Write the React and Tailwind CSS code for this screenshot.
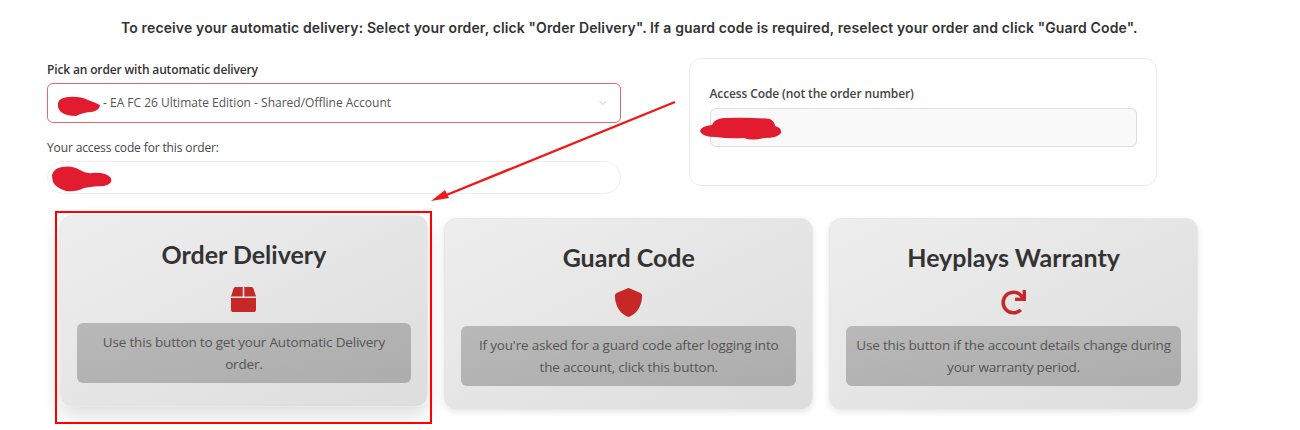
import React from "react";
import { FaBox, FaRedo } from "react-icons/fa";
import { FaShield } from "react-icons/fa6";
import { ChevronDown } from "lucide-react";

const cards = [
  { t: "Order Delivery", d: "Use this button to get your Automatic Delivery order.", I: FaBox, size: 25, lifted: true },
  { t: "Guard Code", d: "If you're asked for a guard code after logging into the account, click this button.", I: FaShield, size: 29 },
  { t: "Heyplays Warranty", d: "Use this button if the account details change during your warranty period.", I: FaRedo, size: 25 },
];

function Card({ t, d, I, size, lifted }) {
  return (
    <div
      className={
        "h-[192px] rounded-[12px] bg-gradient-to-br from-[#eeeeee] to-[#dddddd] px-[16px] pt-[22px] flex flex-col items-center border border-[#e8e8e8] " +
        (lifted ? "-translate-y-[3px] shadow-[0_8px_20px_rgba(0,0,0,0.14)]" : "shadow-[0_2px_6px_rgba(0,0,0,0.1)]")
      }
    >
      <h3 className="text-[25px] leading-[32px] font-bold text-[#333333] font-['Lato',sans-serif]">{t}</h3>
      <div className="mt-[17px] h-[25px] flex items-center justify-center">
        <I className="text-[#c62828] shrink-0" size={size} />
      </div>
      <p className="mt-[11px] w-full h-[60px] rounded-[6px] bg-gradient-to-br from-[#b8b8b8] to-[#adadad] text-center text-[13.5px] tracking-[-0.18px] leading-[22px] text-[#555555] px-[10px] pt-[8px] font-['Open_Sans',sans-serif]">
        {d}
      </p>
    </div>
  );
}

export default function App() {
  return (
    <div className="relative w-[1300px] h-[430px] bg-white overflow-hidden font-['Open_Sans',sans-serif]">
      <p className="pt-[19px] pl-[121px] text-[14px] tracking-[0.13px] leading-[18px] font-semibold text-[#333333] font-['Inter',sans-serif] whitespace-nowrap">
        To receive your automatic delivery: Select your order, click "Order Delivery". If a guard code is required, reselect your order and click "Guard Code".
      </p>

      <div className="mt-[24px] pl-[47px] flex items-start gap-[68px]">
        <div className="w-[574px]">
          <label className="block text-[12px] tracking-[-0.15px] leading-[18px] font-semibold text-[#333333]">Pick an order with automatic delivery</label>
          <div className="mt-[4px] h-[40px] rounded-[6px] border border-[#e46a6a] flex items-center justify-between pl-[55px] pr-[11px]">
            <span className="text-[12px] text-[#555555]">- EA FC 26 Ultimate Edition - Shared/Offline Account</span>
            <ChevronDown size={12} className="text-[#c4c4c4]" />
          </div>
          <label className="block mt-[16px] text-[12px] tracking-[-0.13px] leading-[18px] text-[#444444]">Your access code for this order:</label>
          <div className="mt-[4px] h-[33px] rounded-full border border-[#eeeeee] bg-white" />
        </div>

        <div className="-mt-[3px] w-[468px] h-[128px] rounded-[12px] border border-[#ececec] px-[19.5px] pt-[26px]">
          <label className="block text-[12px] tracking-[-0.12px] leading-[18px] font-semibold text-[#444444]">Access Code (not the order number)</label>
          <div className="mt-[5px] h-[39px] rounded-[6px] border border-[#dddddd] bg-[#f9f9f9]" />
        </div>
      </div>

      <div className="mt-[24px] ml-[59.5px] w-[1138.5px] grid grid-cols-3 gap-[16px]">
        {cards.map((c) => (
          <Card key={c.t} {...c} />
        ))}
      </div>

      {/* annotation overlay */}
      <div className="absolute left-[55px] top-[211px] w-[377px] h-[213px] border-2 border-[#ff0000] pointer-events-none" />
      <svg className="absolute inset-0 pointer-events-none" width="1300" height="430" viewBox="0 0 1300 430">
        <line x1="675" y1="102" x2="444" y2="196" stroke="#f01818" strokeWidth="2.4" />
        <polygon points="431,201 445,190 449,198" fill="#f01818" />
        <path d="M58 103 Q59 98 68 97 Q80 96 88 100 Q94 102 100 105 Q100 110 92 112 Q84 112 76 116 Q66 116 61 112 Q57 108 58 103Z" fill="#e31b2f" />
        <path d="M52 175 Q54 168 62 167 Q72 165 80 170 Q86 174 92 173 Q106 172 111 178 Q113 184 104 186 Q94 186 84 188 Q76 192 66 191 Q56 188 53 182 Q52 178 52 175Z" fill="#e31b2f" />
        <path d="M700 131 Q701 126 712 125 Q714 119 724 118 Q750 117 770 119 Q775 122 775 126 Q782 128 781 133 Q778 138 764 138 Q752 141 744 138 Q730 139 716 137 Q702 137 700 131Z" fill="#e31b2f" />
      </svg>
    </div>
  );
}
